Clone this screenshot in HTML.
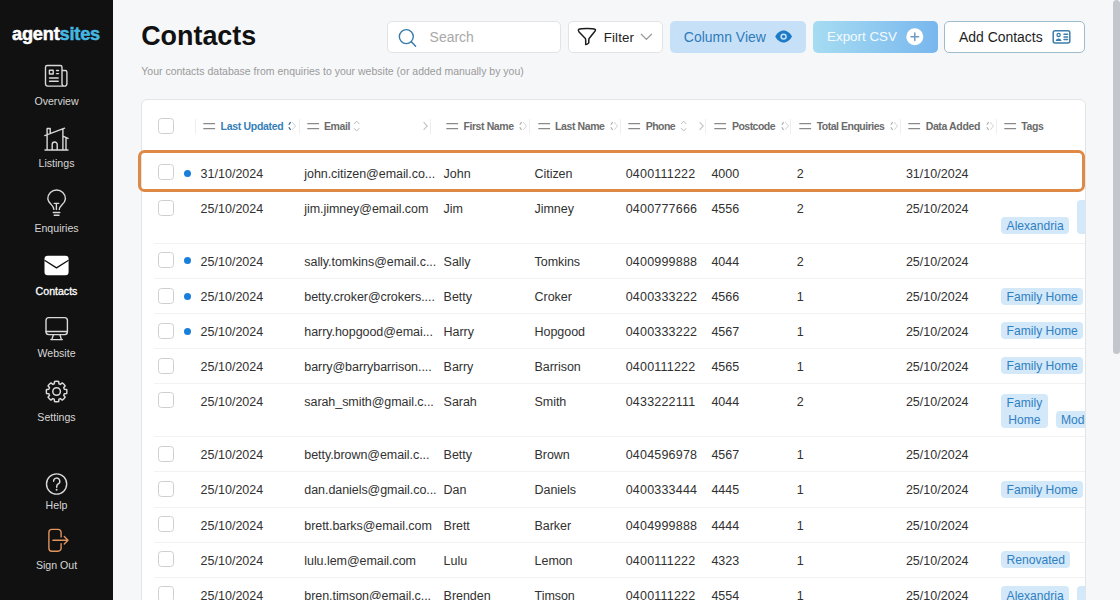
<!DOCTYPE html>
<html><head><meta charset="utf-8"><style>
html,body{margin:0;padding:0;width:1120px;height:600px;overflow:hidden;background:#f6f7f9;font-family:"Liberation Sans", sans-serif;}
.t{position:absolute;white-space:nowrap;font-family:"Liberation Sans", sans-serif;}
.box{position:absolute;box-sizing:border-box;}
.ic{position:absolute;overflow:visible;}
#sb{position:absolute;left:0;top:0;width:113px;height:600px;background:#111111;}
.sl{left:0;width:113px;text-align:center;font-size:10.6px;line-height:12.72px;}
.cb{position:absolute;width:16px;height:16px;box-sizing:border-box;border:1px solid #cfcfcf;border-radius:3.5px;background:#fff;}
.dot{position:absolute;width:7px;height:7px;border-radius:50%;background:#1a7fdb;}
.tags{position:absolute;width:400px;display:flex;align-items:flex-end;gap:8px;}
.tag span{position:relative;top:1.1px;}
.tag{box-sizing:border-box;background:#d3e8f9;color:#2f80c2;border-radius:4px;font-size:12.1px;line-height:17px;padding:0 5.4px;white-space:nowrap;text-align:center;flex:none;}
</style></head><body>
<div id="sb"></div>
<div class="t" style="left:12px;top:22.8px;font-size:18.2px;line-height:22px;font-weight:700;letter-spacing:-0.2px;color:#fff;-webkit-text-stroke:0.5px #fff">agent<span style="color:#45b7e3;-webkit-text-stroke:0.5px #45b7e3">sites</span></div>
<svg class="ic" style="left:40px;top:60px" width="34" height="34" viewBox="0 0 34 34"><g fill="none" stroke="#d9d9d9" stroke-width="1.4" stroke-linecap="round" stroke-linejoin="round"><path d="M22 10.5h3.2c1 0 1.7 .7 1.7 1.7V23.8a2.3 2.3 0 0 1-2.3 2.3 M22 10.5V23.8a2.3 2.3 0 0 0 2.3 2.3 M22 10.5V7.2c0-1-.7-1.7-1.7-1.7H7.2c-1 0-1.7 .7-1.7 1.7V23.8a2.3 2.3 0 0 0 2.3 2.3h16.8"/><path d="M9.5 21.3h8.7 M9.5 18h8.7 M16.5 10.5h2 M16.5 13.6h2"/><rect x="9.4" y="10.2" width="3.8" height="3.8"/></g></svg>
<svg class="ic" style="left:40px;top:122px" width="34" height="34" viewBox="0 0 34 34"><g fill="none" stroke="#d9d9d9" stroke-width="1.4" stroke-linecap="round" stroke-linejoin="round"><path d="M5 28h23 M7.1 28V13.4 M4.8 13.6L24.6 6.2 M22.9 7V28 M22.9 14.2L28 16.4 M26 16V28 M7.1 12.5V6.5h3.1v5 M12.2 28v-5.5a2.5 2.5 0 0 1 5 0V28"/></g></svg>
<svg class="ic" style="left:40px;top:185px" width="34" height="34" viewBox="0 0 34 34"><g fill="none" stroke="#d9d9d9" stroke-width="1.4" stroke-linecap="round" stroke-linejoin="round"><path d="M13.9 24.4c0-2.2-1.5-3.6-3-5.3A8.8 8.8 0 0 1 7.8 13.8A8.8 8.8 0 0 1 25.4 13.8A8.8 8.8 0 0 1 22.4 19.3c-1.6 1.6-3.1 2.9-3.1 5.1 M14.2 18.4h4.5 M16.4 18.4v6 M13.3 27.5h6.5 M14.2 30.3h4.8"/></g></svg>
<svg class="ic" style="left:40px;top:250px" width="34" height="34" viewBox="0 0 34 34"><rect x="4.5" y="5.7" width="24.1" height="19.5" rx="3.2" fill="#fff"/><path d="M4.5 10.3L16.5 17.9L28.6 10.3" fill="none" stroke="#111" stroke-width="1.3" stroke-linejoin="round"/></svg>
<svg class="ic" style="left:40px;top:312px" width="34" height="34" viewBox="0 0 34 34"><g fill="none" stroke="#d9d9d9" stroke-width="1.4" stroke-linecap="round" stroke-linejoin="round"><rect x="6" y="5.6" width="21.4" height="17" rx="2.8"/><path d="M6 19.5h21.4 M13.4 22.8l-1.6 4.8h9.6l-1.4-4.8 M10.8 27.6h11.6"/></g></svg>
<svg class="ic" style="left:40px;top:375px" width="34" height="34" viewBox="0 0 34 34"><g fill="none" stroke="#d9d9d9" stroke-width="1.5" stroke-linejoin="round"><path d="M14.24 8.86 L14.55 6.41 A10.3 10.3 0 0 1 18.65 6.41 L18.96 8.86 A8.0 8.0 0 0 1 20.33 9.42 L22.29 7.92 A10.3 10.3 0 0 1 25.18 10.81 L23.68 12.77 A8.0 8.0 0 0 1 24.24 14.14 L26.69 14.45 A10.3 10.3 0 0 1 26.69 18.55 L24.24 18.86 A8.0 8.0 0 0 1 23.68 20.23 L25.18 22.19 A10.3 10.3 0 0 1 22.29 25.08 L20.33 23.58 A8.0 8.0 0 0 1 18.96 24.14 L18.65 26.59 A10.3 10.3 0 0 1 14.55 26.59 L14.24 24.14 A8.0 8.0 0 0 1 12.87 23.58 L10.91 25.08 A10.3 10.3 0 0 1 8.02 22.19 L9.52 20.23 A8.0 8.0 0 0 1 8.96 18.86 L6.51 18.55 A10.3 10.3 0 0 1 6.51 14.45 L8.96 14.14 A8.0 8.0 0 0 1 9.52 12.77 L8.02 10.81 A10.3 10.3 0 0 1 10.91 7.92 L12.87 9.42 A8.0 8.0 0 0 1 14.24 8.86Z"/><circle cx="16.6" cy="16.5" r="3.8"/></g></svg>
<svg class="ic" style="left:40px;top:467px" width="34" height="34" viewBox="0 0 34 34"><g fill="none" stroke="#d9d9d9" stroke-width="1.4" stroke-linecap="round" stroke-linejoin="round"><circle cx="16.6" cy="17" r="10.1"/><path d="M13.6 14.2a3.1 3.1 0 1 1 4.6 2.7c-.9.6-1.5 1.3-1.5 2.5v.8"/></g><circle cx="16.6" cy="22.7" r="0.95" fill="#d9d9d9"/></svg>
<svg class="ic" style="left:40px;top:523px" width="34" height="34" viewBox="0 0 34 34"><g fill="none" stroke="#e2955e" stroke-width="1.4" stroke-linecap="round" stroke-linejoin="round"><path d="M21.1 13.9V9.4a3 3 0 0 0-3-3h-6.2a3 3 0 0 0-3 3v15.8a3 3 0 0 0 3 3h6.2a3 3 0 0 0 3-3v-4.5 M12.9 17.3h14.9 M24.3 13.6l3.7 3.7-3.7 3.7"/></g></svg>
<div class="t sl" style="top:94.97px;color:#d6d6d6">Overview</div>
<div class="t sl" style="top:157.47px;color:#d6d6d6">Listings</div>
<div class="t sl" style="top:221.97px;color:#d6d6d6">Enquiries</div>
<div class="t sl" style="top:285.37px;color:#fff;-webkit-text-stroke:0.3px #fff">Contacts</div>
<div class="t sl" style="top:346.97px;color:#d6d6d6">Website</div>
<div class="t sl" style="top:410.67px;color:#d6d6d6">Settings</div>
<div class="t sl" style="top:499.17px;color:#d6d6d6">Help</div>
<div class="t sl" style="top:559.47px;color:#d6d6d6">Sign Out</div>
<div class="t" style="left:141.20px;top:19.84px;font-size:26.9px;line-height:32.28px;color:#111;font-weight:700;letter-spacing:0px;">Contacts</div>
<div class="t" style="left:141.30px;top:64.86px;font-size:10.5px;line-height:12.6px;color:#9a9a9a;font-weight:400;letter-spacing:0px;">Your contacts database from enquiries to your website (or added manually by you)</div>
<div class="box" style="left:387px;top:21px;width:173.5px;height:32px;border:1px solid #e1e3e6;background:#fff;border-radius:5px"></div>
<svg class="ic" style="left:390px;top:22px" width="40" height="30" viewBox="0 0 40 30"><g fill="none" stroke="#3b7aa9" stroke-width="1.4" stroke-linecap="round"><circle cx="16.3" cy="14.6" r="7"/><path d="M21.4 19.8L25.6 24.3"/></g></svg>
<div class="t" style="left:429.60px;top:29.00px;font-size:13.95px;line-height:16.74px;color:#a8a8a8;font-weight:400;letter-spacing:0px;">Search</div>
<div class="box" style="left:567.5px;top:21px;width:95.5px;height:32px;border:1px solid #e1e3e6;background:#fff;border-radius:5px"></div>
<svg class="ic" style="left:570px;top:22px" width="90" height="30" viewBox="0 0 90 30"><g fill="none" stroke="#1d1d1d" stroke-width="1.5" stroke-linecap="round" stroke-linejoin="round"><path d="M8.6 7.4c2.6-1.1 13.6-1.3 16.6 0 .8.5-.3 1.8-.9 2.6l-5 6.2c-.4.6-.5 1.2-.5 1.9v2.3c0 .8-1.7 2.1-3.1 2.2v-4.6c0-.7-.2-1.2-.6-1.8L9.1 10c-.5-.8-1.1-2-.5-2.6z"/></g><path d="M71.3 12.2l5.1 5.2 5.1-5.2" fill="none" stroke="#9a9a9a" stroke-width="1.3" stroke-linecap="round" stroke-linejoin="round"/></svg>
<div class="t" style="left:603.80px;top:30.01px;font-size:13.3px;line-height:15.96px;color:#222;font-weight:400;letter-spacing:0.12px;">Filter</div>
<div class="box" style="left:670px;top:21px;width:136px;height:31.5px;background:#c6e1f7;border-radius:5px"></div>
<div class="t" style="left:683.80px;top:28.57px;font-size:13.98px;line-height:16.78px;color:#2f7bbb;font-weight:400;letter-spacing:0px;">Column View</div>
<svg class="ic" style="left:774px;top:28px" width="20" height="17" viewBox="0 0 20 17"><path d="M1.2 8.6C3 5 6.2 2.6 9.6 2.6S16.2 5 18 8.6C16.2 12.2 13 14.6 9.6 14.6S3 12.2 1.2 8.6z" fill="#1d7ac6"/><circle cx="9.6" cy="8.6" r="3.2" fill="#c6e1f7"/><circle cx="9.6" cy="8.6" r="1.7" fill="#1d7ac6"/></svg>
<div class="box" style="left:813px;top:21px;width:124.5px;height:31.5px;background:linear-gradient(90deg,#a6dcf2,#78b7ee);border-radius:5px"></div>
<div class="t" style="left:827.00px;top:29.12px;font-size:13.4px;line-height:16.08px;color:#f4fbff;font-weight:400;letter-spacing:0px;">Export CSV</div>
<svg class="ic" style="left:905px;top:27px" width="20" height="20" viewBox="0 0 20 20"><circle cx="9.8" cy="9.8" r="8.5" fill="#fff"/><path d="M9.8 6v7.6 M6 9.8h7.6" stroke="#6f9cc4" stroke-width="1.5" stroke-linecap="round"/></svg>
<div class="box" style="left:944px;top:20.6px;width:141px;height:32px;border:1px solid #9dbccd;background:#fff;border-radius:5px"></div>
<div class="t" style="left:959.00px;top:28.50px;font-size:13.94px;line-height:16.73px;color:#1e1e1e;font-weight:400;letter-spacing:0px;">Add Contacts</div>
<svg class="ic" style="left:1040px;top:22px" width="50" height="30" viewBox="0 0 50 30"><g fill="none" stroke="#3b7dab" stroke-width="1.5" stroke-linecap="round"><rect x="13.2" y="8.7" width="16.6" height="12.3" rx="2"/><path d="M24 12.3h3.6 M24 14.9h3.6 M24 17.5h3.6"/></g><circle cx="18.6" cy="12.9" r="1.6" fill="none" stroke="#3b7dab" stroke-width="1.3"/><path d="M15.7 18.9c.4-1.5 1.6-2.3 2.9-2.3s2.5.8 2.9 2.3z" fill="#3b7dab"/></svg>
<div class="box" style="left:1112.5px;top:0;width:7.5px;height:354px;background:#c3c6cc;border-radius:4px"></div>
<div class="box" id="card" style="left:141px;top:99px;width:945.2px;height:560px;border:1px solid #e3e4e7;background:#fff;border-radius:6px;overflow:hidden">
<div class="cb" style="left:16.00px;top:18.00px"></div>
<div class="box" style="left:52.60px;top:18.50px;width:1px;height:15px;background:#eeeeee"></div>
<svg class="ic" style="left:60.90px;top:21.00px" width="13" height="10" viewBox="0 0 13 10"><path d="M0.3 2.7h11.8 M0.3 7.6h11.8" stroke="#8a8a8a" stroke-width="1.25"/></svg>
<div class="t" style="left:78.60px;top:20.26px;font-size:10.5px;line-height:12.6px;color:#3580b8;font-weight:700;letter-spacing:-0.308px;">Last Updated</div>
<svg class="ic" style="left:145.00px;top:20.00px" width="10" height="12" viewBox="0 0 10 12"><path d="M3.6 2.2L0.9 6l2.7 3.8" fill="none" stroke="#2f5f87" stroke-width="1.2" stroke-dasharray="3.1 3.1 4"/><path d="M5.2 2.2l3.3 3.8-3.3 3.8" fill="none" stroke="#d2d2d2" stroke-width="1"/></svg>
<div class="box" style="left:156.60px;top:18.50px;width:1px;height:15px;background:#eeeeee"></div>
<svg class="ic" style="left:165.00px;top:21.00px" width="13" height="10" viewBox="0 0 13 10"><path d="M0.3 2.7h11.8 M0.3 7.6h11.8" stroke="#8a8a8a" stroke-width="1.25"/></svg>
<div class="t" style="left:182.00px;top:20.26px;font-size:10.5px;line-height:12.6px;color:#6b6b6b;font-weight:700;letter-spacing:-0.403px;">Email</div>
<svg class="ic" style="left:211.00px;top:19.00px" width="8" height="14" viewBox="0 0 8 14"><path d="M1.1 5l2.6-2.8 2.6 2.8 M1.1 9.2l2.6 2.8 2.6-2.8" fill="none" stroke="#bcbcbc" stroke-width="1"/></svg>
<svg class="ic" style="left:281.40px;top:20.00px" width="6" height="12" viewBox="0 0 6 12"><path d="M0.6 2.2l3.6 3.8-3.6 3.8" fill="none" stroke="#c4c4c4" stroke-width="1.1"/></svg>
<div class="box" style="left:288.20px;top:18.50px;width:1px;height:15px;background:#eeeeee"></div>
<svg class="ic" style="left:304.00px;top:21.00px" width="13" height="10" viewBox="0 0 13 10"><path d="M0.3 2.7h11.8 M0.3 7.6h11.8" stroke="#8a8a8a" stroke-width="1.25"/></svg>
<div class="t" style="left:321.40px;top:20.26px;font-size:10.5px;line-height:12.6px;color:#6b6b6b;font-weight:700;letter-spacing:-0.397px;">First Name</div>
<svg class="ic" style="left:376.40px;top:20.00px" width="10" height="12" viewBox="0 0 10 12"><path d="M3.6 2.2L0.9 6l2.7 3.8" fill="none" stroke="#b0b0b0" stroke-width="1.2" stroke-dasharray="3.1 3.1 4"/><path d="M5.2 2.2l3.3 3.8-3.3 3.8" fill="none" stroke="#d2d2d2" stroke-width="1"/></svg>
<div class="box" style="left:387.40px;top:18.50px;width:1px;height:15px;background:#eeeeee"></div>
<svg class="ic" style="left:395.70px;top:21.00px" width="13" height="10" viewBox="0 0 13 10"><path d="M0.3 2.7h11.8 M0.3 7.6h11.8" stroke="#8a8a8a" stroke-width="1.25"/></svg>
<div class="t" style="left:413.00px;top:20.26px;font-size:10.5px;line-height:12.6px;color:#6b6b6b;font-weight:700;letter-spacing:-0.4px;">Last Name</div>
<svg class="ic" style="left:467.40px;top:20.00px" width="10" height="12" viewBox="0 0 10 12"><path d="M3.6 2.2L0.9 6l2.7 3.8" fill="none" stroke="#b0b0b0" stroke-width="1.2" stroke-dasharray="3.1 3.1 4"/><path d="M5.2 2.2l3.3 3.8-3.3 3.8" fill="none" stroke="#d2d2d2" stroke-width="1"/></svg>
<div class="box" style="left:478.40px;top:18.50px;width:1px;height:15px;background:#eeeeee"></div>
<svg class="ic" style="left:486.40px;top:21.00px" width="13" height="10" viewBox="0 0 13 10"><path d="M0.3 2.7h11.8 M0.3 7.6h11.8" stroke="#8a8a8a" stroke-width="1.25"/></svg>
<div class="t" style="left:503.80px;top:20.26px;font-size:10.5px;line-height:12.6px;color:#6b6b6b;font-weight:700;letter-spacing:-0.576px;">Phone</div>
<svg class="ic" style="left:537.80px;top:19.00px" width="8" height="14" viewBox="0 0 8 14"><path d="M1.1 5l2.6-2.8 2.6 2.8 M1.1 9.2l2.6 2.8 2.6-2.8" fill="none" stroke="#bcbcbc" stroke-width="1"/></svg>
<svg class="ic" style="left:556.50px;top:20.00px" width="6" height="12" viewBox="0 0 6 12"><path d="M0.6 2.2l3.6 3.8-3.6 3.8" fill="none" stroke="#c4c4c4" stroke-width="1.1"/></svg>
<div class="box" style="left:563.40px;top:18.50px;width:1px;height:15px;background:#eeeeee"></div>
<svg class="ic" style="left:572.20px;top:21.00px" width="13" height="10" viewBox="0 0 13 10"><path d="M0.3 2.7h11.8 M0.3 7.6h11.8" stroke="#8a8a8a" stroke-width="1.25"/></svg>
<div class="t" style="left:589.90px;top:20.26px;font-size:10.5px;line-height:12.6px;color:#6b6b6b;font-weight:700;letter-spacing:-0.507px;">Postcode</div>
<svg class="ic" style="left:638.00px;top:20.00px" width="10" height="12" viewBox="0 0 10 12"><path d="M3.6 2.2L0.9 6l2.7 3.8" fill="none" stroke="#b0b0b0" stroke-width="1.2" stroke-dasharray="3.1 3.1 4"/><path d="M5.2 2.2l3.3 3.8-3.3 3.8" fill="none" stroke="#d2d2d2" stroke-width="1"/></svg>
<div class="box" style="left:648.40px;top:18.50px;width:1px;height:15px;background:#eeeeee"></div>
<svg class="ic" style="left:657.30px;top:21.00px" width="13" height="10" viewBox="0 0 13 10"><path d="M0.3 2.7h11.8 M0.3 7.6h11.8" stroke="#8a8a8a" stroke-width="1.25"/></svg>
<div class="t" style="left:674.70px;top:20.26px;font-size:10.5px;line-height:12.6px;color:#6b6b6b;font-weight:700;letter-spacing:-0.487px;">Total Enquiries</div>
<svg class="ic" style="left:746.80px;top:20.00px" width="10" height="12" viewBox="0 0 10 12"><path d="M3.6 2.2L0.9 6l2.7 3.8" fill="none" stroke="#b0b0b0" stroke-width="1.2" stroke-dasharray="3.1 3.1 4"/><path d="M5.2 2.2l3.3 3.8-3.3 3.8" fill="none" stroke="#d2d2d2" stroke-width="1"/></svg>
<div class="box" style="left:758.00px;top:18.50px;width:1px;height:15px;background:#eeeeee"></div>
<svg class="ic" style="left:766.00px;top:21.00px" width="13" height="10" viewBox="0 0 13 10"><path d="M0.3 2.7h11.8 M0.3 7.6h11.8" stroke="#8a8a8a" stroke-width="1.25"/></svg>
<div class="t" style="left:783.70px;top:20.26px;font-size:10.5px;line-height:12.6px;color:#6b6b6b;font-weight:700;letter-spacing:-0.37px;">Data Added</div>
<svg class="ic" style="left:842.50px;top:20.00px" width="10" height="12" viewBox="0 0 10 12"><path d="M3.6 2.2L0.9 6l2.7 3.8" fill="none" stroke="#b0b0b0" stroke-width="1.2" stroke-dasharray="3.1 3.1 4"/><path d="M5.2 2.2l3.3 3.8-3.3 3.8" fill="none" stroke="#d2d2d2" stroke-width="1"/></svg>
<div class="box" style="left:853.80px;top:18.50px;width:1px;height:15px;background:#eeeeee"></div>
<svg class="ic" style="left:861.80px;top:21.00px" width="13" height="10" viewBox="0 0 13 10"><path d="M0.3 2.7h11.8 M0.3 7.6h11.8" stroke="#8a8a8a" stroke-width="1.25"/></svg>
<div class="t" style="left:879.30px;top:20.26px;font-size:10.5px;line-height:12.6px;color:#6b6b6b;font-weight:700;letter-spacing:-0.431px;">Tags</div>
<div class="cb" style="left:16.00px;top:64.40px"></div>
<div class="dot" style="left:42.40px;top:70.10px"></div>
<div class="t" style="left:58.60px;top:67px;font-size:12.5px;line-height:15px;color:#313131;letter-spacing:0.01px">31/10/2024</div>
<div class="t" style="left:162.30px;top:67px;font-size:12.5px;line-height:15px;color:#313131;letter-spacing:-0.06px">john.citizen@email.co...</div>
<div class="t" style="left:301.60px;top:67px;font-size:12.5px;line-height:15px;color:#313131;letter-spacing:-0.04px">John</div>
<div class="t" style="left:392.60px;top:67px;font-size:12.5px;line-height:15px;color:#313131;letter-spacing:-0.06px">Citizen</div>
<div class="t" style="left:483.70px;top:67px;font-size:12.5px;line-height:15px;color:#313131;letter-spacing:0.2px">0400111222</div>
<div class="t" style="left:569.40px;top:67px;font-size:12.5px;line-height:15px;color:#313131;letter-spacing:0.02px">4000</div>
<div class="t" style="left:654.80px;top:67px;font-size:12.5px;line-height:15px;color:#313131;letter-spacing:0.0px">2</div>
<div class="t" style="left:763.90px;top:67px;font-size:12.5px;line-height:15px;color:#313131;letter-spacing:0.01px">31/10/2024</div>
<div class="box" style="left:12.00px;top:142.80px;width:940px;height:1px;background:#f2f2f2"></div>
<div class="cb" style="left:16.00px;top:99.90px"></div>
<div class="t" style="left:58.60px;top:102px;font-size:12.5px;line-height:15px;color:#313131;letter-spacing:0.01px">25/10/2024</div>
<div class="t" style="left:162.30px;top:102px;font-size:12.5px;line-height:15px;color:#313131;letter-spacing:-0.06px">jim.jimney@email.com</div>
<div class="t" style="left:301.60px;top:102px;font-size:12.5px;line-height:15px;color:#313131;letter-spacing:-0.04px">Jim</div>
<div class="t" style="left:392.60px;top:102px;font-size:12.5px;line-height:15px;color:#313131;letter-spacing:-0.06px">Jimney</div>
<div class="t" style="left:483.70px;top:102px;font-size:12.5px;line-height:15px;color:#313131;letter-spacing:0.2px">0400777666</div>
<div class="t" style="left:569.40px;top:102px;font-size:12.5px;line-height:15px;color:#313131;letter-spacing:0.02px">4556</div>
<div class="t" style="left:654.80px;top:102px;font-size:12.5px;line-height:15px;color:#313131;letter-spacing:0.0px">2</div>
<div class="t" style="left:763.90px;top:102px;font-size:12.5px;line-height:15px;color:#313131;letter-spacing:0.01px">25/10/2024</div>
<div class="tags" style="left:859.20px;top:90.80px;height:43.30px"><div class="tag"><span>Alexandria</span></div><div class="tag" style="color:transparent"><span>Family<br>Home</span></div></div>
<div class="box" style="left:12.00px;top:178.20px;width:940px;height:1px;background:#f2f2f2"></div>
<div class="cb" style="left:16.00px;top:152.20px"></div>
<div class="dot" style="left:42.40px;top:157.40px"></div>
<div class="t" style="left:58.60px;top:155px;font-size:12.5px;line-height:15px;color:#313131;letter-spacing:0.01px">25/10/2024</div>
<div class="t" style="left:162.30px;top:155px;font-size:12.5px;line-height:15px;color:#313131;letter-spacing:-0.06px">sally.tomkins@email.c...</div>
<div class="t" style="left:301.60px;top:155px;font-size:12.5px;line-height:15px;color:#313131;letter-spacing:-0.04px">Sally</div>
<div class="t" style="left:392.60px;top:155px;font-size:12.5px;line-height:15px;color:#313131;letter-spacing:-0.06px">Tomkins</div>
<div class="t" style="left:483.70px;top:155px;font-size:12.5px;line-height:15px;color:#313131;letter-spacing:0.2px">0400999888</div>
<div class="t" style="left:569.40px;top:155px;font-size:12.5px;line-height:15px;color:#313131;letter-spacing:0.02px">4044</div>
<div class="t" style="left:654.80px;top:155px;font-size:12.5px;line-height:15px;color:#313131;letter-spacing:0.0px">2</div>
<div class="t" style="left:763.90px;top:155px;font-size:12.5px;line-height:15px;color:#313131;letter-spacing:0.01px">25/10/2024</div>
<div class="box" style="left:12.00px;top:213.30px;width:940px;height:1px;background:#f2f2f2"></div>
<div class="cb" style="left:16.00px;top:187.60px"></div>
<div class="dot" style="left:42.40px;top:192.80px"></div>
<div class="t" style="left:58.60px;top:190px;font-size:12.5px;line-height:15px;color:#313131;letter-spacing:0.01px">25/10/2024</div>
<div class="t" style="left:162.30px;top:190px;font-size:12.5px;line-height:15px;color:#313131;letter-spacing:-0.06px">betty.croker@crokers....</div>
<div class="t" style="left:301.60px;top:190px;font-size:12.5px;line-height:15px;color:#313131;letter-spacing:-0.04px">Betty</div>
<div class="t" style="left:392.60px;top:190px;font-size:12.5px;line-height:15px;color:#313131;letter-spacing:-0.06px">Croker</div>
<div class="t" style="left:483.70px;top:190px;font-size:12.5px;line-height:15px;color:#313131;letter-spacing:0.2px">0400333222</div>
<div class="t" style="left:569.40px;top:190px;font-size:12.5px;line-height:15px;color:#313131;letter-spacing:0.02px">4566</div>
<div class="t" style="left:654.80px;top:190px;font-size:12.5px;line-height:15px;color:#313131;letter-spacing:0.0px">1</div>
<div class="t" style="left:763.90px;top:190px;font-size:12.5px;line-height:15px;color:#313131;letter-spacing:0.01px">25/10/2024</div>
<div class="tags" style="left:859.20px;top:178.50px;height:26.10px"><div class="tag"><span>Family Home</span></div></div>
<div class="box" style="left:12.00px;top:248.10px;width:940px;height:1px;background:#f2f2f2"></div>
<div class="cb" style="left:16.00px;top:222.70px"></div>
<div class="dot" style="left:42.40px;top:227.90px"></div>
<div class="t" style="left:58.60px;top:225px;font-size:12.5px;line-height:15px;color:#313131;letter-spacing:0.01px">25/10/2024</div>
<div class="t" style="left:162.30px;top:225px;font-size:12.5px;line-height:15px;color:#313131;letter-spacing:-0.06px">harry.hopgood@emai...</div>
<div class="t" style="left:301.60px;top:225px;font-size:12.5px;line-height:15px;color:#313131;letter-spacing:-0.04px">Harry</div>
<div class="t" style="left:392.60px;top:225px;font-size:12.5px;line-height:15px;color:#313131;letter-spacing:-0.06px">Hopgood</div>
<div class="t" style="left:483.70px;top:225px;font-size:12.5px;line-height:15px;color:#313131;letter-spacing:0.2px">0400333222</div>
<div class="t" style="left:569.40px;top:225px;font-size:12.5px;line-height:15px;color:#313131;letter-spacing:0.02px">4567</div>
<div class="t" style="left:654.80px;top:225px;font-size:12.5px;line-height:15px;color:#313131;letter-spacing:0.0px">1</div>
<div class="t" style="left:763.90px;top:225px;font-size:12.5px;line-height:15px;color:#313131;letter-spacing:0.01px">25/10/2024</div>
<div class="tags" style="left:859.20px;top:213.60px;height:25.80px"><div class="tag"><span>Family Home</span></div></div>
<div class="box" style="left:12.00px;top:283.00px;width:940px;height:1px;background:#f2f2f2"></div>
<div class="cb" style="left:16.00px;top:257.50px"></div>
<div class="t" style="left:58.60px;top:260px;font-size:12.5px;line-height:15px;color:#313131;letter-spacing:0.01px">25/10/2024</div>
<div class="t" style="left:162.30px;top:260px;font-size:12.5px;line-height:15px;color:#313131;letter-spacing:-0.06px">barry@barrybarrison....</div>
<div class="t" style="left:301.60px;top:260px;font-size:12.5px;line-height:15px;color:#313131;letter-spacing:-0.04px">Barry</div>
<div class="t" style="left:392.60px;top:260px;font-size:12.5px;line-height:15px;color:#313131;letter-spacing:-0.06px">Barrison</div>
<div class="t" style="left:483.70px;top:260px;font-size:12.5px;line-height:15px;color:#313131;letter-spacing:0.2px">0400111222</div>
<div class="t" style="left:569.40px;top:260px;font-size:12.5px;line-height:15px;color:#313131;letter-spacing:0.02px">4565</div>
<div class="t" style="left:654.80px;top:260px;font-size:12.5px;line-height:15px;color:#313131;letter-spacing:0.0px">1</div>
<div class="t" style="left:763.90px;top:260px;font-size:12.5px;line-height:15px;color:#313131;letter-spacing:0.01px">25/10/2024</div>
<div class="tags" style="left:859.20px;top:248.40px;height:25.90px"><div class="tag"><span>Family Home</span></div></div>
<div class="box" style="left:12.00px;top:336.30px;width:940px;height:1px;background:#f2f2f2"></div>
<div class="cb" style="left:16.00px;top:292.40px"></div>
<div class="t" style="left:58.60px;top:295px;font-size:12.5px;line-height:15px;color:#313131;letter-spacing:0.01px">25/10/2024</div>
<div class="t" style="left:162.30px;top:295px;font-size:12.5px;line-height:15px;color:#313131;letter-spacing:-0.06px">sarah_smith@gmail.c...</div>
<div class="t" style="left:301.60px;top:295px;font-size:12.5px;line-height:15px;color:#313131;letter-spacing:-0.04px">Sarah</div>
<div class="t" style="left:392.60px;top:295px;font-size:12.5px;line-height:15px;color:#313131;letter-spacing:-0.06px">Smith</div>
<div class="t" style="left:483.70px;top:295px;font-size:12.5px;line-height:15px;color:#313131;letter-spacing:0.2px">0433222111</div>
<div class="t" style="left:569.40px;top:295px;font-size:12.5px;line-height:15px;color:#313131;letter-spacing:0.02px">4044</div>
<div class="t" style="left:654.80px;top:295px;font-size:12.5px;line-height:15px;color:#313131;letter-spacing:0.0px">2</div>
<div class="t" style="left:763.90px;top:295px;font-size:12.5px;line-height:15px;color:#313131;letter-spacing:0.01px">25/10/2024</div>
<div class="tags" style="left:859.20px;top:283.30px;height:44.30px"><div class="tag"><span>Family<br>Home</span></div><div class="tag"><span>Modern</span></div></div>
<div class="box" style="left:12.00px;top:371.30px;width:940px;height:1px;background:#f2f2f2"></div>
<div class="cb" style="left:16.00px;top:345.70px"></div>
<div class="t" style="left:58.60px;top:348px;font-size:12.5px;line-height:15px;color:#313131;letter-spacing:0.01px">25/10/2024</div>
<div class="t" style="left:162.30px;top:348px;font-size:12.5px;line-height:15px;color:#313131;letter-spacing:-0.06px">betty.brown@email.c...</div>
<div class="t" style="left:301.60px;top:348px;font-size:12.5px;line-height:15px;color:#313131;letter-spacing:-0.04px">Betty</div>
<div class="t" style="left:392.60px;top:348px;font-size:12.5px;line-height:15px;color:#313131;letter-spacing:-0.06px">Brown</div>
<div class="t" style="left:483.70px;top:348px;font-size:12.5px;line-height:15px;color:#313131;letter-spacing:0.2px">0404596978</div>
<div class="t" style="left:569.40px;top:348px;font-size:12.5px;line-height:15px;color:#313131;letter-spacing:0.02px">4567</div>
<div class="t" style="left:654.80px;top:348px;font-size:12.5px;line-height:15px;color:#313131;letter-spacing:0.0px">1</div>
<div class="t" style="left:763.90px;top:348px;font-size:12.5px;line-height:15px;color:#313131;letter-spacing:0.01px">25/10/2024</div>
<div class="box" style="left:12.00px;top:406.60px;width:940px;height:1px;background:#f2f2f2"></div>
<div class="cb" style="left:16.00px;top:380.70px"></div>
<div class="t" style="left:58.60px;top:383px;font-size:12.5px;line-height:15px;color:#313131;letter-spacing:0.01px">25/10/2024</div>
<div class="t" style="left:162.30px;top:383px;font-size:12.5px;line-height:15px;color:#313131;letter-spacing:-0.06px">dan.daniels@gmail.co...</div>
<div class="t" style="left:301.60px;top:383px;font-size:12.5px;line-height:15px;color:#313131;letter-spacing:-0.04px">Dan</div>
<div class="t" style="left:392.60px;top:383px;font-size:12.5px;line-height:15px;color:#313131;letter-spacing:-0.06px">Daniels</div>
<div class="t" style="left:483.70px;top:383px;font-size:12.5px;line-height:15px;color:#313131;letter-spacing:0.2px">0400333444</div>
<div class="t" style="left:569.40px;top:383px;font-size:12.5px;line-height:15px;color:#313131;letter-spacing:0.02px">4445</div>
<div class="t" style="left:654.80px;top:383px;font-size:12.5px;line-height:15px;color:#313131;letter-spacing:0.0px">1</div>
<div class="t" style="left:763.90px;top:383px;font-size:12.5px;line-height:15px;color:#313131;letter-spacing:0.01px">25/10/2024</div>
<div class="tags" style="left:859.20px;top:371.60px;height:26.30px"><div class="tag"><span>Family Home</span></div></div>
<div class="box" style="left:12.00px;top:441.60px;width:940px;height:1px;background:#f2f2f2"></div>
<div class="cb" style="left:16.00px;top:416.00px"></div>
<div class="t" style="left:58.60px;top:419px;font-size:12.5px;line-height:15px;color:#313131;letter-spacing:0.01px">25/10/2024</div>
<div class="t" style="left:162.30px;top:419px;font-size:12.5px;line-height:15px;color:#313131;letter-spacing:-0.06px">brett.barks@email.com</div>
<div class="t" style="left:301.60px;top:419px;font-size:12.5px;line-height:15px;color:#313131;letter-spacing:-0.04px">Brett</div>
<div class="t" style="left:392.60px;top:419px;font-size:12.5px;line-height:15px;color:#313131;letter-spacing:-0.06px">Barker</div>
<div class="t" style="left:483.70px;top:419px;font-size:12.5px;line-height:15px;color:#313131;letter-spacing:0.2px">0404999888</div>
<div class="t" style="left:569.40px;top:419px;font-size:12.5px;line-height:15px;color:#313131;letter-spacing:0.02px">4444</div>
<div class="t" style="left:654.80px;top:419px;font-size:12.5px;line-height:15px;color:#313131;letter-spacing:0.0px">1</div>
<div class="t" style="left:763.90px;top:419px;font-size:12.5px;line-height:15px;color:#313131;letter-spacing:0.01px">25/10/2024</div>
<div class="box" style="left:12.00px;top:477.00px;width:940px;height:1px;background:#f2f2f2"></div>
<div class="cb" style="left:16.00px;top:451.00px"></div>
<div class="t" style="left:58.60px;top:454px;font-size:12.5px;line-height:15px;color:#313131;letter-spacing:0.01px">25/10/2024</div>
<div class="t" style="left:162.30px;top:454px;font-size:12.5px;line-height:15px;color:#313131;letter-spacing:-0.06px">lulu.lem@email.com</div>
<div class="t" style="left:301.60px;top:454px;font-size:12.5px;line-height:15px;color:#313131;letter-spacing:-0.04px">Lulu</div>
<div class="t" style="left:392.60px;top:454px;font-size:12.5px;line-height:15px;color:#313131;letter-spacing:-0.06px">Lemon</div>
<div class="t" style="left:483.70px;top:454px;font-size:12.5px;line-height:15px;color:#313131;letter-spacing:0.2px">0400111222</div>
<div class="t" style="left:569.40px;top:454px;font-size:12.5px;line-height:15px;color:#313131;letter-spacing:0.02px">4323</div>
<div class="t" style="left:654.80px;top:454px;font-size:12.5px;line-height:15px;color:#313131;letter-spacing:0.0px">1</div>
<div class="t" style="left:763.90px;top:454px;font-size:12.5px;line-height:15px;color:#313131;letter-spacing:0.01px">25/10/2024</div>
<div class="tags" style="left:859.20px;top:441.90px;height:26.40px"><div class="tag"><span>Renovated</span></div></div>
<div class="box" style="left:12.00px;top:512.20px;width:940px;height:1px;background:#f2f2f2"></div>
<div class="cb" style="left:16.00px;top:486.40px"></div>
<div class="t" style="left:58.60px;top:489px;font-size:12.5px;line-height:15px;color:#313131;letter-spacing:0.01px">25/10/2024</div>
<div class="t" style="left:162.30px;top:489px;font-size:12.5px;line-height:15px;color:#313131;letter-spacing:-0.06px">bren.timson@email.c...</div>
<div class="t" style="left:301.60px;top:489px;font-size:12.5px;line-height:15px;color:#313131;letter-spacing:-0.04px">Brenden</div>
<div class="t" style="left:392.60px;top:489px;font-size:12.5px;line-height:15px;color:#313131;letter-spacing:-0.06px">Timson</div>
<div class="t" style="left:483.70px;top:489px;font-size:12.5px;line-height:15px;color:#313131;letter-spacing:0.2px">0400111222</div>
<div class="t" style="left:569.40px;top:489px;font-size:12.5px;line-height:15px;color:#313131;letter-spacing:0.02px">4554</div>
<div class="t" style="left:654.80px;top:489px;font-size:12.5px;line-height:15px;color:#313131;letter-spacing:0.0px">1</div>
<div class="t" style="left:763.90px;top:489px;font-size:12.5px;line-height:15px;color:#313131;letter-spacing:0.01px">25/10/2024</div>
<div class="tags" style="left:859.20px;top:477.30px;height:26.20px"><div class="tag"><span>Alexandria</span></div><div class="tag" style="color:transparent"><span>Family Home</span></div></div>
</div>
<div class="box" style="left:137.8px;top:149.8px;width:947.4px;height:42.1px;border:3px solid #de8a46;border-radius:6.5px"></div>
</body></html>
